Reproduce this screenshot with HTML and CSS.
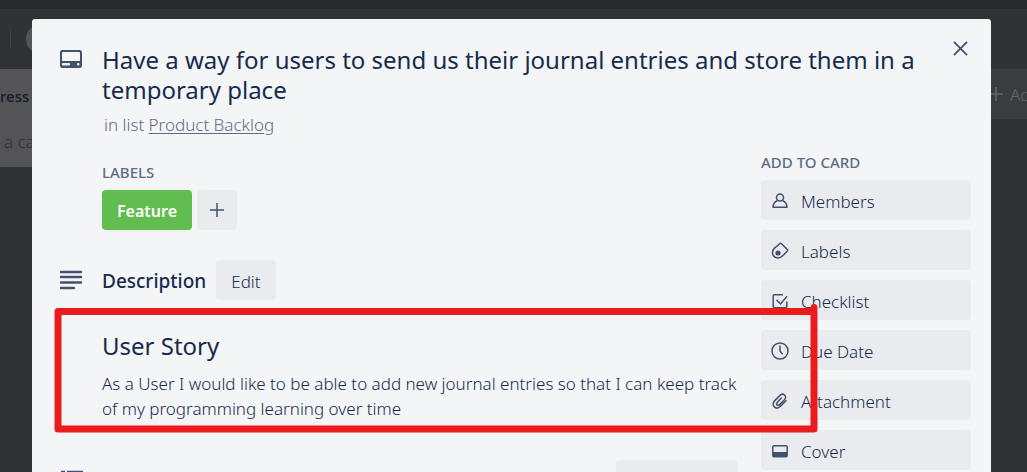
FILE: index.html
```html
<!DOCTYPE html>
<html lang="en">
<head>
<meta charset="utf-8">
<meta name="viewport" content="width=device-width, initial-scale=1">
<title>Card details</title>
<link rel="stylesheet" href="styles.css">
</head>
<body>
<div class="board" aria-hidden="true">
  <div class="topbar"></div>
  <div class="board-header"><span class="divider"></span><span class="avatar"></span></div>
  <div class="lists">
    <div class="list">
      <div class="list-name">ress</div>
      <div class="list-add">a card</div>
    </div>
    <div class="add-list">
      <svg class="add-icon" viewBox="0 0 16 16"><path d="M8 1v14M1 8h14" fill="none" stroke="currentColor" stroke-width="1.5"/></svg>
      <span>Add</span>
    </div>
  </div>
</div>

<main class="dialog" role="dialog" aria-labelledby="card-title">
  <header class="card-header">
    <svg class="icon-lg" viewBox="0 0 24 24"><path fill-rule="evenodd" fill="currentColor" d="M3.500 3h17a2.500 2.500 0 0 1 2.500 2.500v13a2.500 2.500 0 0 1-2.500 2.500h-17A2.500 2.500 0 0 1 1 18.500v-13A2.500 2.500 0 0 1 3.500 3Zm.3 2a.8.8 0 0 0-.8.800V14h18V5.800a.8.8 0 0 0-.8-.8ZM4 16a1 1 0 0 0-1 1v.500a1 1 0 0 0 1 1h6a1 1 0 0 0 1-1V17a1 1 0 0 0-1-1Zm15 0a1 1 0 0 0-1 1v.500a1 1 0 0 0 1 1h.5a1 1 0 0 0 1-1V17a1 1 0 0 0-1-1Z"/></svg>
    <div class="card-heading">
      <h1 id="card-title" class="card-title">Have a way for users to send us their journal entries and store them in a temporary place</h1>
      <p class="card-list">in list <a href="#">Product Backlog</a></p>
    </div>
    <button class="close" type="button" aria-label="Close"><svg class="icon-close" viewBox="0 0 16 16"><path d="M1 1l14 14M15 1L1 15" fill="none" stroke="currentColor" stroke-width="2"/></svg></button>
  </header>

  <div class="card-body">
    <div class="card-main">
      <section class="labels">
        <h3 class="caption">LABELS</h3>
        <div class="label-row">
          <button class="label-chip" type="button">Feature</button>
          <button class="btn btn-square" type="button" aria-label="Add label"><svg class="icon-plus" viewBox="0 0 16 16"><path d="M8 1v14M1 8h14" fill="none" stroke="currentColor" stroke-width="1.5"/></svg></button>
        </div>
      </section>

      <section class="description">
        <div class="section-head">
          <svg class="icon-lg" viewBox="0 0 24 24"><path d="M2 4h20M2 9h20M2 14.500h20M2 20h13" fill="none" stroke="currentColor" stroke-width="2.400" stroke-linecap="round"/></svg>
          <h3 class="section-title">Description</h3>
          <button class="btn" type="button">Edit</button>
        </div>
        <div class="section-text">
          <h2 class="story-title">User Story</h2>
          <p class="story-text">As a User I would like to be able to add new journal entries so that I can keep track of my programming learning over time</p>
        </div>
      </section>

      <section class="activity" aria-label="Activity">
        <div class="section-head">
          <svg class="icon-lg" viewBox="0 0 24 24"><path d="M2 4h4M8 4h17M2 12h4M8 12h17M2 20h4M8 20h17" fill="none" stroke="currentColor" stroke-width="2.400"/></svg>
          <button class="btn btn-end" type="button" aria-label="Hide details"></button>
        </div>
      </section>
    </div>

    <aside class="sidebar">
      <h3 class="caption">ADD TO CARD</h3>
      <button class="btn side-btn" type="button">
        <svg class="icon-sm" viewBox="0 0 18 18"><g fill="none" stroke="currentColor" stroke-width="1.500" stroke-linejoin="round"><circle cx="9" cy="5.500" r="3.500"/><path d="M6.500 8.500C3.800 9.600 2.200 12 2 15.300h14C15.800 12 14.200 9.600 11.500 8.500"/></g></svg>
        <span>Members</span></button>
      <button class="btn side-btn" type="button">
        <svg class="icon-sm" viewBox="0 0 18 18"><path d="M9 1.500q.8-.5 1.500.2l5.800 5.800q.7.700 0 1.500L12 13.600c-2.500 2.900-6.800 3-9 .8-2.200-2.200-2-6 .5-8.300Z" fill="none" stroke="currentColor" stroke-width="1.500" stroke-linejoin="round"/><circle cx="7" cy="11" r="2.600" fill="currentColor"/></svg>
        <span>Labels</span></button>
      <button class="btn side-btn" type="button">
        <svg class="icon-sm" viewBox="0 0 18 18"><path d="M12 2.700H3.200q-1 0-1 1v11q0 1 1 1h11.600q1 0 1-1V9.500M5.500 8l4 4L16 4.200" fill="none" stroke="currentColor" stroke-width="1.500"/></svg>
        <span>Checklist</span></button>
      <button class="btn side-btn" type="button">
        <svg class="icon-sm" viewBox="0 0 18 18"><g fill="none" stroke="currentColor" stroke-width="1.500" stroke-linecap="round"><circle cx="9" cy="9" r="8"/><path d="M9 4v5l2.200 2.800"/></g></svg>
        <span>Due Date</span></button>
      <button class="btn side-btn" type="button">
        <svg class="icon-sm" viewBox="0 0 18 18"><path d="M15 8.800l-5.500 5.500c-1.900 1.900-4.500 2.200-6.200.6s-1.400-4.400.5-6.300l5-5c1.500-1.500 3.600-1.700 4.900-.4s1.100 3.300-.4 4.800l-4.600 4.600c-.9.900-2 1-2.700.3s-.6-1.800.3-2.700l4.200-4.200" fill="none" stroke="currentColor" stroke-width="1.500" stroke-linecap="round"/></svg>
        <span>Attachment</span></button>
      <button class="btn side-btn" type="button">
        <svg class="icon-sm" viewBox="0 0 18 18"><rect x="1.800" y="3.800" width="14.400" height="11" rx="1.200" fill="none" stroke="currentColor" stroke-width="1.500"/><path d="M2 10h14v5H2z" fill="currentColor"/></svg>
        <span>Cover</span></button>
    </aside>

    <svg class="marker" viewBox="0 0 764 130" aria-hidden="true"><path d="M760 3.500V125M4 7.500H760M4 7.500V125M4 125H760" fill="none" stroke="currentColor" stroke-width="7" stroke-linecap="round"/></svg>
  </div>
</main>
</body>
</html>
```
FILE: styles.css
```css
* { box-sizing: border-box; }

body {
  margin: 0;
  height: 100vh;
  overflow: hidden;
  position: relative;
  background: #2f3334;
  color: #172b4d;
  font: 300 17px/25px "Noto Sans", "Open Sans", sans-serif;
}

h1, h2, h3, p { margin: 0; }

svg { display: block; flex: none; }

/* Dimmed board behind the dialog */
.topbar { height: 9px; background: #272b2c; }
.board-header {
  display: flex;
  align-items: center;
  height: 60px;
  gap: 15px;
  padding-left: 10px;
}
.divider { width: 1px; height: 20px; background: #3e4243; }
.avatar { width: 30px; height: 30px; border-radius: 50%; background: #555455; }
.lists { display: flex; justify-content: space-between; align-items: flex-start; }
.list {
  width: 100px;
  height: 98px;
  padding-top: 15px;
  background: #545355;
  color: #111b2b;
}
.list-name { font-size: 15px; font-weight: 500; }
.list-add { padding: 20px 0 0 4px; color: #2b313c; white-space: nowrap; }
.add-list {
  display: flex;
  align-items: center;
  gap: 6px;
  width: 60px;
  height: 50px;
  padding-left: 21px;
  overflow: hidden;
  white-space: nowrap;
  background: #3a3d3e;
  color: #666869;
}
.add-icon { width: 16px; height: 16px; }

/* Dialog */
.dialog {
  position: absolute;
  top: 19px;
  left: 32px;
  right: 36px;
  bottom: 0;
  overflow: hidden;
  padding: 0 20px 0 27px;
  border-radius: 3px 3px 0 0;
  background: #f4f5f7;
}
.card-header { display: flex; align-items: flex-start; padding-top: 26px; }
.card-header .icon-lg { margin-top: 2px; }
.icon-lg { width: 24px; height: 24px; margin-right: 19px; color: #42526e; }
.card-heading { flex: 1; }
.card-title { font-size: 24px; line-height: 30px; font-weight: 450; }
.card-list { padding: 7px 0 0 2px; color: #5e6c84; }
.card-list a { color: inherit; text-underline-offset: 2px; }
.close {
  margin: -14px 0 0 8px;
  padding: 10px 3px;
  border: 0;
  background: none;
  color: #42526e;
}
.icon-close { width: 15px; height: 15px; }

.card-body { display: flex; gap: 23px; position: relative; padding-top: 15px; }
.card-main { flex: 1; padding-top: 10px; }
.caption {
  height: 20px;
  margin-bottom: 8px;
  font-size: 15px;
  line-height: 20px;
  font-weight: 500;
  color: #5e6c84;
}
.labels { padding-left: 43px; }
.label-row { display: flex; gap: 5px; }
.btn, .label-chip {
  display: flex;
  align-items: center;
  justify-content: center;
  height: 40px;
  padding: 3px 15px 0;
  border: 0;
  border-radius: 4px;
  background: #eaebef;
  color: #172b4d;
  font: inherit;
}
.label-chip { background: #61bd4f; color: #fff; font-size: 16px; font-weight: 600; }
.btn-square { width: 40px; padding: 0; color: #42526e; }
.icon-plus { width: 16px; height: 16px; }

.description { padding-top: 30px; }
.section-head { display: flex; align-items: center; }
.section-title { margin-right: 10px; padding-top: 3px; font-size: 19px; font-weight: 500; }
.btn-end { width: 122px; margin-left: auto; }
.section-text { padding: 31px 0 0 43px; }
.story-title { font-size: 24px; line-height: 30px; font-weight: 450; }
.story-text { padding-top: 10px; }
.activity { padding-top: 39px; }

.sidebar { flex: none; width: 210px; }
.side-btn {
  justify-content: flex-start;
  gap: 12px;
  width: 100%;
  margin-bottom: 10px;
  padding: 3px 10px 0;
}
.icon-sm { width: 18px; height: 18px; color: #42526e; }
.side-btn .icon-sm { margin-bottom: 2px; }

/* Hand-drawn highlight over the story */
.marker {
  position: absolute;
  top: 167px;
  left: -5px;
  width: 764px;
  height: 130px;
  pointer-events: none;
  color: #e81c1c;
}
```
